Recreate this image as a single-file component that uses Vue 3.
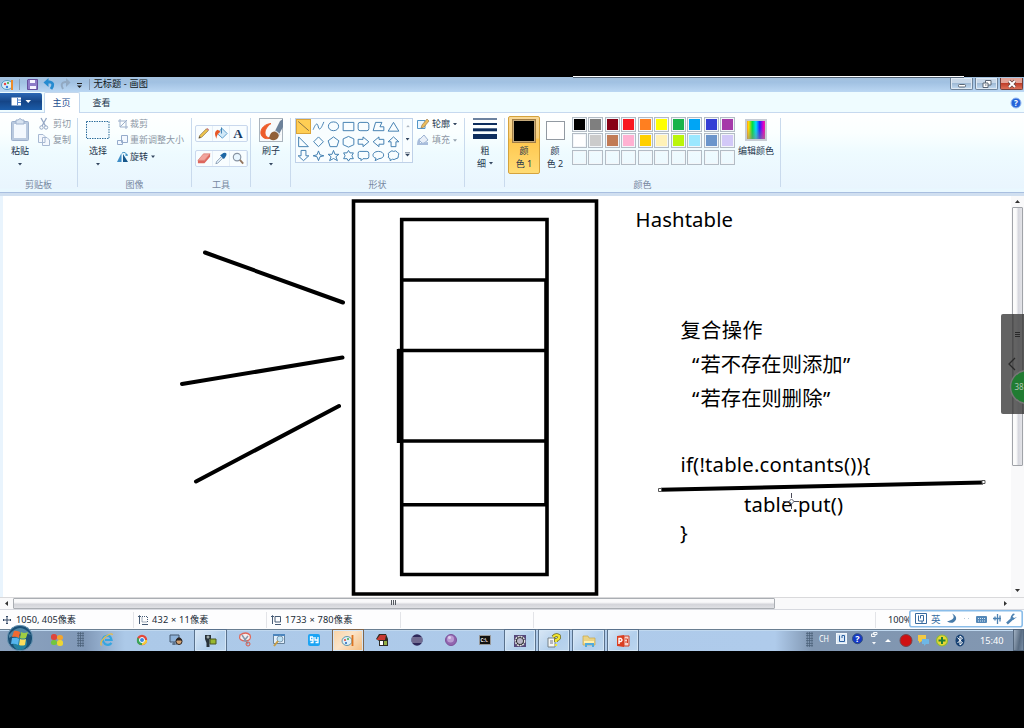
<script setup>
const shapes = [
  'M2 2.5 13 12',
  'M2 11C4 6 6 3 7 7S9 13 13 3',
  'M7.5 3C14.5 3 14.5 12 7.5 12S.5 3 7.5 3Z',
  'M2 3.5H13V12H2Z',
  'M4 3.5H11Q13 3.5 13 5.5V10Q13 12 11 12H4Q2 12 2 10V5.5Q2 3.5 4 3.5Z',
  'M4.5 3.5H11L9 8H13V12H2Z',
  'M7.5 3.5 13 12.5H2Z',
  'M2.5 3V13H12.5Z',
  'M7.5 3 12.5 8 7.5 13 2.5 8Z',
  'M7.5 3 13 7 11 13H4L2 7Z',
  'M7.5 2.5 13 5V11L7.5 13.5 2 11V5Z',
  'M2 5.5H7V3L13 8 7 13V10.5H2Z',
  'M13 5.5H8V3L2 8 8 13V10.5H13Z',
  'M7.5 3 13 8H10V13H5V8H2Z',
  'M5 2.5H10V8H13L7.5 13 2 8H5Z',
  'M7.5 3 9 7 13 8 9 9 7.5 13 6 9 2 8 6 7Z',
  'M7.5 2.5 9 6.5H13L10 9 11.5 13 7.5 10.8 3.5 13 5 9 2 6.5H6Z',
  'M7.5 2.5 9 5H12.5L11 8 12.5 11H9L7.5 13.5 6 11H2.5L4 8 2.5 5H6Z',
  'M3.5 3.5H11Q13 3.5 13 5.5V9Q13 11 11 11H7L5 13V11H4Q2 11 2 9V5.5Q2 3.5 3.5 3.5Z',
  'M7.5 3.5C14 3.5 15 10.5 8 11L4 13 5 10.5C0 9.5 1 3.5 7.5 3.5Z',
  'M4 4Q6 2 7.5 3.5Q10 2 11.5 4.5Q14 5 12.5 8Q13 11 10 11Q8 12.5 6.5 11.5L4 13V11Q1 10 2.5 8Q1 5 4 4Z',
]
const colors = [
  '#000', '#7f7f7f', '#880015', '#f81820', '#ff7f20', '#ffff00', '#18b34a', '#00a5f5', '#353ed5', '#a53aa9',
  '#fff', '#cbcbcb', '#c17b55', '#ffb1d2', '#ffd000', '#fff2b8', '#baf50a', '#9be8ff', '#6c95cb', '#d2c9f8',
  '', '', '', '', '', '', '', '', '', '',
]
</script>

<template>
  <div class="screen">
    <header class="titlebar">
      <svg class="quick" viewBox="0 0 90 15">
        <ellipse cx="7" cy="8" rx="5.500" ry="4.500" fill="#d6eefa" stroke="#579bc4" />
        <circle cx="5" cy="7" r="1.200" fill="#e44" /><circle cx="8" cy="6" r="1.100" fill="#4a4" /><circle cx="7" cy="10" r="1.200" fill="#37d" />
        <path d="M12 13V3" stroke="#ed8b28" stroke-width="2" />
        <path d="M19.500 2V13M89.500 2V13" stroke="#8599b2" />
        <path d="M28 2.500H37.500V12.500H27.500V3Z" fill="#8d7bc8" stroke="#65509d" /><path d="M30 3H35V6H30ZM30 9H36V12H30Z" fill="#f5f3ff" />
        <path d="M47 5H50Q55 6 51 12" fill="none" stroke="#268bd0" stroke-width="2.800" /><path d="M43.500 5.500 48.500 1V10Z" fill="#268bd0" />
        <path d="M67 5H65Q59.500 6 63 12" fill="none" stroke="#92a9c2" stroke-width="2" /><path d="M70.500 5.500 66 1V10Z" fill="#92a9c2" />
        <path d="M77 6.500H82" stroke="#222" /><path d="M77 8.500H82L79.500 11Z" fill="#222" />
      </svg>
      <span class="title">无标题 - 画图</span>
      <i class="edge"></i>
      <div class="winbtns">
        <b><svg viewBox="0 0 22 12"><rect x="7.500" y="6.500" width="7" height="2.500" rx="1" fill="#fff" stroke="#5b6675" /></svg></b>
        <b><svg viewBox="0 0 22 12"><path d="M9.500 2.500H15V7H9.500Z" fill="#fff" stroke="#5b6675" /><path d="M7 5H12V9.500H7Z" fill="#fff" stroke="#5b6675" /><path d="M9 7H10.500" stroke="#5b6675" /></svg></b>
        <b class="close"><svg viewBox="0 0 22 12"><path d="M8 3 14 9M14 3 8 9" stroke="#69423f" stroke-width="3.500" /><path d="M8 3 14 9M14 3 8 9" stroke="#fff" stroke-width="2" /></svg></b>
      </div>
    </header>
    <nav class="tabs">
      <div class="file"><svg viewBox="0 0 41 17"><path d="M11.500 4.500H21V12.500H11.500Z" fill="#fff" /><path d="M17.500 5V12M18 7H21M18 9.500H21" stroke="#5584ca" /><path d="M25.500 7H31L28.200 10Z" fill="#fff" /></svg></div>
      <div class="tab active">主页</div>
      <div class="tab">查看</div>
      <svg class="help" viewBox="0 0 12 12"><circle cx="6" cy="6" r="5" fill="#2564da" stroke="#9abaf0" /><text x="6" y="9" text-anchor="middle" font-size="8" font-weight="bold" fill="#fff">?</text></svg>
    </nav>

    <section class="ribbon">
      <div class="group g-clip">
        <div class="body">
          <div class="big paste">
            <svg viewBox="0 0 24 26"><rect x="3.500" y="3.500" width="17" height="19" rx="1" fill="#b9c9df" stroke="#9db0cc" /><path d="M6 6H18V20H6Z" fill="#f3f8fe" /><path d="M8 2H10Q12 -1 14 2H16V6H8Z" fill="#d7e2f0" stroke="#9db0cc" /></svg>
            <span>粘贴</span><i class="caret"></i>
          </div>
          <div class="rows">
            <div class="off"><svg viewBox="0 0 12 12"><path d="M3 0 7.500 8M8.500 0 4 8" stroke="#95a8c5" stroke-width="1.300" /><circle cx="3.500" cy="9.500" r="1.700" fill="none" stroke="#95a8c5" /><circle cx="8" cy="9.500" r="1.700" fill="none" stroke="#95a8c5" /></svg>剪切</div>
            <div class="off"><svg viewBox="0 0 12 12"><path d="M.5 .5H5L7 2.500V8.500H.5ZM4.500 3.500H9L11.500 6V11.500H4.500Z" fill="#f4f8fd" stroke="#a7b9d2" /></svg>复制</div>
          </div>
        </div>
        <footer>剪贴板</footer>
      </div>
      <div class="group g-image">
        <div class="body">
          <div class="big select">
            <svg viewBox="0 0 24 26"><rect x=".5" y="3.500" width="22.500" height="17" fill="#f3fbff" stroke="#2d6c9b" stroke-dasharray="1.500 1" /></svg>
            <span>选择</span><i class="caret"></i>
          </div>
          <div class="rows">
            <div class="off"><svg viewBox="0 0 12 12"><path d="M3 1V9H11M1 3H9V11M3 9 10 2" fill="none" stroke="#9db0cb" /></svg>裁剪</div>
            <div class="off"><svg viewBox="0 0 12 12"><path d="M4.500 1.500H10.500V8.500H4.500ZM.5 6.500H5.500V10.500H.5Z" fill="#f2f8ff" stroke="#95abcb" /></svg>重新调整大小</div>
            <div><svg viewBox="0 0 12 12"><path d="M0 11H4.500V2Z" fill="#408ec7" /><path d="M6 11H11L6 3Z" fill="#16588c" /><path d="M5 2Q9 0 10 5M8 4H11" fill="none" stroke="#3c91c5" /></svg>旋转<i class="caret"></i></div>
          </div>
        </div>
        <footer>图像</footer>
      </div>
      <div class="group g-tools">
        <div class="body">
          <div class="toolbox">
            <svg viewBox="0 0 17 16"><path d="M3 13 4 10 11 3 13 5 6 12Z" fill="#edc34c" stroke="#836d42" stroke-width=".7" /><path d="M11 3 13 5 14 4 12 2Z" fill="#ce7979" /><path d="M3 13 4 11 5 12Z" fill="#333" /></svg>
            <svg viewBox="0 0 17 16"><path d="M4.500 8 9.500 2.500 15 8 10 13Z" fill="#d1e9f8" stroke="#569aca" /><path d="M3.500 13.500Q0 6 5 4L8 6Q4 8 3.500 13.500Z" fill="#e75626" /><path d="M9 1.500V8" stroke="#367cae" /></svg>
            <svg viewBox="0 0 17 16"><text x="8.500" y="13" text-anchor="middle" class="serif" fill="#17385f">A</text></svg>
          </div>
          <div class="toolbox">
            <svg viewBox="0 0 17 16"><path d="M2 10 8 3H15L9 10Z" fill="#f2a49d" stroke="#d67569" stroke-width=".7" /><path d="M2 10H9L15 3V6L9 13H2Z" fill="#dd675e" /></svg>
            <svg viewBox="0 0 17 16"><path d="M3 13.500 4 11 9 6 10.500 7.500 5 13Z" fill="#e5f1fb" stroke="#68809b" stroke-width=".7" /><path d="M7.500 4.500 11.500 8.500 12.500 7.500 14 5Q15.500 1 11 2L8.500 4Z" fill="#1d66a5" /></svg>
            <svg viewBox="0 0 17 16"><circle cx="7.500" cy="6.500" r="4" fill="#e8f6ff" stroke="#8793a2" stroke-width="1.200" /><path d="M10.500 9.500 14 13.500" stroke="#937660" stroke-width="2" /></svg>
          </div>
        </div>
        <footer>工具</footer>
      </div>
      <div class="group g-brush">
        <div class="body">
          <div class="big">
            <svg viewBox="0 0 24 26"><rect x=".5" y=".5" width="23" height="23" fill="#f8fafb" stroke="#aab4bd" /><path d="M12 5.500C-2 7 -1 24 12 20C4 20 4 11 12 5.500Z" fill="#ed5d2b" stroke="#ed5d2b" /><path d="M15 15 21 3 24 1V9L19 18Z" fill="#6d829a" /><path d="M16 13 21 17" stroke="#d5dce5" stroke-width="2" /><path d="M10 20Q12 12 17 14Q22 17 18 21Q13 24 10 20Z" fill="#916039" /></svg>
            <span>刷子</span><i class="caret"></i>
          </div>
        </div>
      </div>
      <div class="group g-shapes">
        <div class="body">
          <div class="gallery">
            <div class="cells"><svg v-for="(d, i) in shapes" :key="i" :class="{ chosen: i === 0 }" viewBox="0 0 15 15"><path :d="d" /></svg></div>
            <div class="spin"><i class="caret up"></i><i class="caret"></i><i class="caret more"></i></div>
          </div>
          <div class="rows">
            <div><svg viewBox="0 0 12 12"><path d="M.5 2.500H8V10.500H.5Z" fill="#e9f6ff" stroke="#5396c8" /><path d="M4 10 5 7 10 1 12 3 7 9Z" fill="#ecbd5c" stroke="#947041" stroke-width=".6" /></svg>轮廓<i class="caret"></i></div>
            <div class="off"><svg viewBox="0 0 12 12"><path d="M2 6 7 1 11 6 6 10Z" fill="#e8eff8" stroke="#9cb2d1" /><path d="M0 11Q0 5 3 4V9L11 8V11Z" fill="#a8bddb" /></svg>填充<i class="caret"></i></div>
          </div>
        </div>
        <footer>形状</footer>
      </div>
      <div class="group g-size">
        <div class="body">
          <div class="big">
            <svg viewBox="0 0 24 26"><path d="M0 1H24" stroke="#0d2e5e" stroke-width="1.200" /><path d="M0 6H24" stroke="#0d2e5e" stroke-width="2" /><path d="M0 11.800H24" stroke="#0d2e5e" stroke-width="3" /><path d="M0 18.500H24" stroke="#0d2e5e" stroke-width="5" /></svg>
            <span>粗</span><span>细<i class="caret"></i></span>
          </div>
        </div>
      </div>
      <div class="group g-color">
        <div class="body">
          <div class="slot on"><i class="sw1"></i><span>颜</span><span>色 1</span></div>
          <div class="slot"><i class="sw2"></i><span>颜</span><span>色 2</span></div>
          <div class="palette"><i v-for="(c, i) in colors" :key="i" :style="{ backgroundColor: c || 'transparent' }"></i></div>
          <div class="edit"><i></i><span>编辑颜色</span></div>
        </div>
        <footer>颜色</footer>
      </div>
    </section>

    <main class="work">
      <svg class="paper" viewBox="0 196 1011 401" width="1011" height="401">
        <path d="M0 196H3V597H0Z" fill="#e9f4fd" />
        <g fill="none" stroke="#000" stroke-width="3.600">
          <path d="M353.500 201H596.500V594H353.500Z" />
          <path d="M401.700 219.500H547V574.500H401.700ZM401.700 280H547M398 350.500H547M398 441H547M401.700 504.800H547" />
          <path d="M545.200 280V504" stroke-width="2" /><path d="M399.800 349V443" stroke-width="6" />
        </g>
        <path d="M205 252.500 343 302.500M182 384 342.500 357.500M196 481.500 339 406" stroke="#000" stroke-width="4" stroke-linecap="round" />
        <path d="M661 489.800 983 482.500" stroke="#000" stroke-width="4" />
        <path d="M658.500 488.500H661.500V491.500H658.500ZM982 480.500H985V483.500H982Z" fill="#fff" stroke="#555" />
        <text x="635.500" y="227" textLength="97.500">Hashtable</text>
        <text x="680.500" y="337.500" textLength="82">复合操作</text>
        <text x="692" y="371.500" textLength="8">“</text><text x="700.500" y="371.500" textLength="142">若不存在则添加</text><text x="843" y="371.500" textLength="8">”</text>
        <text x="692" y="405.500" textLength="8">“</text><text x="700.500" y="405.500" textLength="122">若存在则删除</text><text x="823" y="405.500" textLength="8">”</text>
        <text x="680.500" y="472" textLength="190">if(!table.contants()){</text>
        <text x="744" y="512" textLength="99">table.put()</text>
        <text x="680" y="540">}</text>
        <path d="M791.500 493V498M791.500 504V509M783 501.500H788M794 501.500H799" stroke="#4b4b58" /><circle cx="791.500" cy="501.500" r="2" fill="none" stroke="#777785" />
      </svg>
      <aside class="vscroll"><i class="arrow top"></i><i class="thumb"></i><i class="arrow bottom"></i></aside>
      <svg class="float" viewBox="0 0 23 100"><rect width="26" height="100" rx="2" fill="#4d4d4d" fill-opacity=".88" /><path d="M12 0V100M22 0V100" stroke="#333" stroke-opacity=".45" /><path d="M14 18.500H19M14 20.500H19M14 22.500H19" stroke="#292929" /><path d="M14 44 8 50 14 56" fill="none" stroke="#292929" stroke-width="1.300" /><circle cx="26" cy="73" r="16.500" fill="#217c32" stroke="#777" stroke-width="1.500" /><text x="13.500" y="75.500" font-size="8" fill="#aec5b2">38</text></svg>
    </main>
    <div class="hscroll"><i class="arrow left"></i><div class="hthumb"><i></i><i></i><i></i></div><i class="arrow right"></i></div>

    <div class="status">
      <div class="s1"><svg viewBox="0 0 10 10"><path d="M5 1V9M1 5H9M4 2 5 1 6 2M4 8 5 9 6 8M2 4 1 5 2 6M8 4 9 5 8 6" fill="none" stroke="#344966" /></svg>1050, 405像素</div>
      <div class="s2"><svg viewBox="0 0 10 10"><path d="M1.500 1V9M0 2 1.500 .5 3 2M4 9.500H10" fill="none" stroke="#465b75" /><path d="M4 1.500H9.500V7H4Z" fill="none" stroke="#465b75" stroke-dasharray="1 1" /></svg><span class="wide">432 × 11像素</span></div>
      <div class="s3"><svg viewBox="0 0 10 10"><path d="M1.500 1V9M0 2 1.500 .5 3 2M4 9.500H10M4 1.500H9.500V7H4Z" fill="none" stroke="#465b75" /></svg><span class="wide">1733 × 780像素</span></div>
      <div class="s4"></div><div class="s5"></div>
      <div class="s6">100%</div>
      <svg class="ime" viewBox="0 0 114 18">
        <rect x=".8" y=".8" width="112.400" height="16" rx="2" fill="#fff" stroke="#8abde9" stroke-width="1.600" />
        <g fill="none" stroke="#386b9f"><path d="M6.500 3.500H17.500V13.500H6.500Z" /><path d="M9.500 5.500V11H14.500V5.500H11.500V8.500M13 11V13" /></g>
        <text x="22" y="13" font-size="9.500" fill="#356da3">英</text>
        <path d="M43 3.500Q48 9 38 11.500Q44 15 47 9.500Q48 6 43 3.500Z" fill="#477ba9" />
        <path d="M55 8.500H56M59 8.500H60" stroke="#b8cada" />
        <rect x="67" y="6" width="11" height="7" rx="1" fill="#5488b8" /><path d="M69 8.500H76M69 11H76" stroke="#d8e8f5" stroke-dasharray="1 1" />
        <path d="M88.500 4V14M84 8.500H92M86 6.500V10.500M91 5.500V11.500" stroke="#4d82b2" stroke-width="1.300" />
        <path d="M98 13.500 104 8" stroke="#4d82b2" stroke-width="2.500" /><path d="M104 3.500Q99 9 104 10L108 7 105 8 103.500 6.500 106 4Z" fill="#4d82b2" />
      </svg>
    </div>

    <footer class="taskbar">
      <svg class="start" viewBox="0 0 28 26"><circle cx="14" cy="13" r="12.700" fill="#1b5076" stroke="#6f9ab7" /><path d="M3 10Q14-4 25 10Q14 6 3 13Z" fill="#78adc5" opacity=".6" /><circle cx="14" cy="18" r="7" fill="#2ba1bd" opacity=".6" /><path d="M8 6Q10 5 14 7L13 13Q10 11 6 12Z" fill="#f06a32" /><path d="M15 7Q18 9 22 7L20 13Q17 14 14 13Z" fill="#9fce42" /><path d="M6 13Q10 12 13 14L12 20Q9 18 5 19Z" fill="#55b5ee" /><path d="M14 14Q17 15 20 14L19 20Q16 21 13 20Z" fill="#fbdc5b" /></svg>
      <svg class="quad" viewBox="0 0 14 14"><rect x="1" y="1" width="6" height="6" rx="2.500" fill="#dd463c" /><rect x="7" y="2" width="6" height="5" rx="2.500" fill="#f4a52c" /><rect x="1" y="7" width="6" height="5" rx="2.500" fill="#72c63e" /><rect x="7" y="7" width="6" height="6" rx="2.500" fill="#edd633" /></svg>
      <i class="grip"></i>
      <div class="apps">
        <div><svg viewBox="0 0 16 16"><path d="M12.500 11Q10 14 6 12Q2 8 5 5Q11 1 12.500 8H6" fill="none" stroke="#35a6e1" stroke-width="2.200" /><path d="M2.500 13.500Q0 11 6 5Q13 0 13.500 3" fill="none" stroke="#ecbd42" stroke-width="1.200" /></svg></div>
        <div><svg viewBox="0 0 16 16"><circle cx="8" cy="8" r="5.200" fill="#e3483b" /><path d="M8 8H13Q14 12 8 13.200Z" fill="#f4ca3d" /><path d="M3.500 5.500 8 9 8 13Q2 13 3 7Z" fill="#38a65b" /><circle cx="8" cy="8" r="2.500" fill="#3888df" stroke="#fff" /></svg></div>
        <div><svg viewBox="0 0 16 16"><path d="M2 3H11V10H2Z" fill="#8eb2d9" stroke="#43576e" /><path d="M4 12H9M6 10V13" stroke="#43576e" /><circle cx="11" cy="9.500" r="3" fill="#d5a474" stroke="#2c2522" /><path d="M7.500 8.500Q11 2 14.500 8.500Z" fill="#2c2522" /></svg></div>
        <div class="open"><svg viewBox="0 0 16 16"><path d="M3 2H9V6H7.500V14H4.500V10L3 6Z" fill="#28323a" /><circle cx="6" cy="4" r="1.500" fill="#9eaaa9" /><path d="M8 6H14V11H8Z" fill="#98b82d" stroke="#485522" /></svg></div>
        <div><svg viewBox="0 0 16 16"><path d="M3 3Q9-1 13 3Q15 8 9 9Q1 9 3 3Z" fill="#f4eded" stroke="#df6659" stroke-width="1.300" /><path d="M5 3 11 12M11 4 7 9" stroke="#8497ab" stroke-width="1.500" /><circle cx="11" cy="12" r="2" fill="none" stroke="#db5a4c" /></svg></div>
        <div><svg viewBox="0 0 16 16"><path d="M2.500 2.500H13.500V11.500H2.500Z" fill="#e2effb" stroke="#67829b" /><path d="M2 3H14" stroke="#4b85bd" stroke-width="2" /><circle cx="9" cy="7" r="3" fill="#bde2f4" stroke="#829cb4" /><path d="M7 9 3 14" stroke="#c89d44" stroke-width="2" /></svg></div>
        <div><svg viewBox="0 0 16 16"><rect x="2" y="2" width="12" height="12" rx="2" fill="#1ca4f4" /><path d="M7 5H4.500V8H7V5M7 8V10.500H4.500M9 5V8H12V5M12 8V10.500H9.500" fill="none" stroke="#fff" stroke-width="1.300" /></svg></div>
        <div class="open orange"><svg viewBox="0 0 16 16"><ellipse cx="7" cy="8" rx="5" ry="4.500" fill="#ddeff7" stroke="#6398a9" /><circle cx="5" cy="7" r="1" fill="#d43" /><circle cx="8" cy="6" r="1" fill="#4a4" /><circle cx="6" cy="10" r="1" fill="#26b" /><path d="M12.500 2V13" stroke="#dc7321" stroke-width="1.800" /></svg></div>
        <div><svg viewBox="0 0 16 16"><path d="M2 7 5 2H12L14 7V14H5V9Z" fill="#2f2c25" /><path d="M3 7 6 3H12L11 8H3Z" fill="#c73932" /><path d="M6 9H9V13H6Z" fill="#fff" /><path d="M10 9H13V13H10Z" fill="#91af43" /></svg></div>
        <div><svg viewBox="0 0 16 16"><circle cx="8" cy="8" r="5.700" fill="#2e285a" /><path d="M3 6H13M2.500 8H13.500M3 10H13" stroke="#b4aec8" stroke-width="1.100" /></svg></div>
        <div><svg viewBox="0 0 16 16"><circle cx="8" cy="8" r="5.500" fill="#9164af" stroke="#7d5199" /><circle cx="7.500" cy="7" r="3.500" fill="#b99bd2" /><circle cx="6.500" cy="5.500" r="1.500" fill="#ddcdea" /></svg></div>
        <div><svg viewBox="0 0 16 16"><path d="M2.500 3.500H13.500V12.500H2.500Z" fill="#111" stroke="#999" /><text x="3.500" y="10" font-size="4.500" font-weight="bold" fill="#fff">C:\.</text></svg></div>
        <div class="open"><svg viewBox="0 0 16 16"><rect x="2" y="2" width="12" height="12" fill="#56497a" /><circle cx="8" cy="8" r="4.600" fill="#19191e" stroke="#dfdfdf" stroke-width="1.500" stroke-dasharray="2 .7" /><circle cx="8" cy="8" r="3" fill="#b9b6c6" /></svg></div>
        <div class="open"><svg viewBox="0 0 16 16"><path d="M2 5H9V14H2Z" fill="#f5f6f4" stroke="#758088" /><path d="M4 8H7M4 10H7" stroke="#778" /><path d="M7 4Q10 1 13 3Q14 6 10 7V9" fill="none" stroke="#6b651c" stroke-width="3.600" /><path d="M7 4Q10 1 13 3Q14 6 10 7V9M10 11V13" fill="none" stroke="#f0e532" stroke-width="2.200" /></svg></div>
        <div class="open"><svg viewBox="0 0 16 16"><path d="M2 3H7L8 5H14V12H2Z" fill="#ead384" stroke="#c9a849" stroke-width=".7" /><path d="M3 8H13V10H3Z" fill="#fff0af" /><path d="M4 14V10H13V14H11V12H6V14Z" fill="#51aadb" /></svg></div>
        <div class="open"><svg viewBox="0 0 16 16"><path d="M2 3 9 2V14L2 13Z" fill="#db3e21" /><path d="M9 3H14V13H9Z" fill="#f8d5ce" stroke="#d34127" /><path d="M4 11V5.500H6Q8 7 6 8.500H4" fill="none" stroke="#fff" stroke-width="1.400" /><path d="M10 6H12.500V10M10 9H13" fill="none" stroke="#d34127" /></svg></div>
      </div>
      <i class="grip right"></i>
      <svg class="tray" viewBox="0 0 158 22">
        <text x="5" y="13" textLength="10" lengthAdjust="spacingAndGlyphs" font-size="8.500" fill="#fff">CH</text>
        <rect x="22.500" y="4.500" width="10" height="10" fill="#dce9f7" stroke="#f2f7fb" /><path d="M25.500 6.500V12.500H30.500V6.500H28V9" fill="none" stroke="#2c609f" />
        <circle cx="43.500" cy="9.700" r="5" fill="#1438c6" stroke="#33507e" /><text x="43.500" y="13" text-anchor="middle" font-size="9" font-weight="bold" fill="#fff">?</text>
        <path d="M59.500 3.500H63V5.500H59.500ZM57.500 5H61V7.500H57.500Z" fill="#8297b1" stroke="#f5f8fb" /><path d="M58 13H62L60 15.500Z" fill="#f5f8fb" />
        <path d="M71 13H77L74 10Z" fill="#fff" />
        <circle cx="92" cy="11.500" r="6" fill="#cf1012" stroke="#73454b" />
        <path d="M104 6H112V12H108L105 14V12H104Z" fill="#f2c945" /><path d="M108 10H115V15H112L110 17V15H108Z" fill="#6eb7e6" />
        <circle cx="128" cy="11.500" r="5.500" fill="#e9d631" stroke="#8bbb39" stroke-width="1.200" /><path d="M128 8V15M124.500 11.500H131.500" stroke="#218137" stroke-width="2" />
        <ellipse cx="146" cy="11.500" rx="4.500" ry="6" fill="#174173" /><path d="M143.500 8.500 148.500 14 146 16V7L148.500 9 143.500 14" fill="none" stroke="#fff" />
      </svg>
      <span class="clock">15:40</span>
      <i class="desktop"></i>
    </footer>
  </div>
</template>

<style>
body { background: #000; overflow: hidden; }
</style>
<style scoped>
* { box-sizing: border-box; }
.screen { width: 1024px; height: 728px; padding-top: 77px; background: #000; font: 9px/12px "Noto Sans", "Noto Sans CJK SC", sans-serif; color: #24364d; display: flex; flex-direction: column; overflow: hidden; }
svg { display: block; flex: none; overflow: visible; }
i { font-style: normal; flex: none; }
.titlebar { position: relative; height: 15px; flex: none; display: flex; background: linear-gradient(#a4c2df, #a1c1e2 35%, #bbd7f3); }
.quick { width: 90px; height: 15px; }
.title { margin-left: 3.500px; line-height: 14px; color: #101820; white-space: nowrap; font-size: 9.200px; letter-spacing: .1px; }
.edge { position: absolute; left: 573px; top: -1px; width: 391px; height: 2px; background: #fff; border-bottom: 1px solid #536477; }
.winbtns { margin-left: auto; display: flex; gap: 2px; padding: 1px 1px 0 0; }
.winbtns b { width: 23px; height: 12px; border: 1px solid #6e839a; border-top: 0; border-radius: 0 0 2px 2px; background: linear-gradient(#c8d8e9 0 45%, #9db8d4 46%, #c4dcf3); box-shadow: inset 0 0 0 1px #e0eaf4; }
.winbtns svg { width: 22px; height: 12px; }
.winbtns .close { background: linear-gradient(#e4a599 0 45%, #be3a26 46%, #dc7159); border-color: #74403b; box-shadow: none; }
.tabs { height: 21px; flex: none; background: #effcff; border-bottom: 1px solid #c6d9ef; display: flex; align-items: flex-start; }
.file { width: 42px; height: 17px; margin-top: 1px; background: linear-gradient(#2b67b5, #154587 50%, #1b5ca9); border-radius: 0 2px 0 0; }
.file svg { width: 41px; height: 17px; }
.tab { height: 20px; padding: 5px 12px 0 11.500px; margin-left: 1px; }
.tab.active { width: 36px; height: 21px; margin-left: 2px; padding: 4px 1px 0 0; text-align: center; color: #244d90; background: #fff; border: 1px solid #c3d7ed; border-bottom: 0; border-radius: 2px 2px 0 0; }
.help { width: 12px; height: 12px; margin: 5px 2px 0 auto; }
.ribbon { height: 83px; flex: none; display: flex; background: linear-gradient(#fff 0, #faffff 25%, #eefbff 50%, #e9f5fe 94%, #e9f8ff 95%); border-bottom: 3px solid #d0dff0; box-shadow: inset 0 -1px #a9bfe0; }
.group { height: 69px; margin-top: 5px; border-right: 1px solid #c9daed; display: flex; flex-direction: column; white-space: nowrap; }
.body { height: 61px; display: flex; align-items: flex-start; flex: none; }
.group footer { color: #7788a1; text-align: center; line-height: 11px; }
.g-clip { width: 78px; } .g-image { width: 114px; } .g-tools { width: 59px; } .g-brush { width: 40px; } .g-shapes { width: 174px; } .g-size { width: 40px; } .g-color { width: 276px; }
.big { width: 24px; display: flex; flex-direction: column; align-items: center; }
.big svg { width: 24px; height: 26px; margin-bottom: 1px; }
.paste { margin-left: 8px; } .select { margin-left: 8px; }
.g-brush .big, .g-size .big { margin-left: 8px; }
.g-size .big { line-height: 12.500px; }
.caret { display: inline-block; width: 4px; height: 2.500px; background: #344760; clip-path: polygon(0 0, 100% 0, 50% 100%); }
.big > .caret { margin-top: 6px; }
.big span .caret { margin: 0 0 2px 3px; }
.rows .caret { margin-left: 3px; }
.rows { display: flex; flex-direction: column; }
.rows div { height: 16.300px; display: flex; align-items: center; }
.rows svg { width: 12px; height: 12px; margin-right: 3px; }
.rows .off { color: #8d97a5; }
.rows .off .caret { opacity: .5; }
.rows { margin-top: -2px; }
.g-clip .rows { margin-left: 6px; } .g-image .rows { margin-left: 7px; } .g-shapes .rows { margin-left: 4px; }
.g-image .rows svg { margin-right: 1px; }
.g-tools .body { flex-direction: column; padding: 7px 0 0 3px; gap: 8px; }
.toolbox { display: flex; width: 53px; height: 17px; border: 1px solid #c9d8ed; border-radius: 2px; background: #f8fdff; }
.toolbox svg { width: 17px; height: 15px; border-right: 1px solid #e5eff8; }
.serif { font: bold 14px "Liberation Serif", serif; }
.gallery { margin: 0 0 0 4px; width: 118px; height: 45px; border: 1px solid #bfd1e8; background: #f8fdff; display: flex; }
.cells { display: grid; grid-template-columns: repeat(7, 15px); grid-auto-rows: 14.600px; width: 106px; }
.cells svg { width: 15px; height: 14.600px; fill: none; stroke: #3878ad; stroke-width: .95; }
.cells .chosen { background: #ffce54; outline: 1px solid #daa43a; outline-offset: -1px; stroke: #826d42; }
.spin { border-left: 1px solid #d7e5f3; width: 10px; display: flex; flex-direction: column; justify-content: space-around; align-items: center; }
.spin .up { transform: rotate(180deg); opacity: .4; }
.spin .more { width: 5px; height: 5px; clip-path: polygon(0 0, 100% 0, 100% 20%, 0 20%, 0 45%, 100% 45%, 50% 100%, 0 45%); }
.slot { width: 30px; height: 58px; display: flex; flex-direction: column; align-items: center; padding-top: 3px; line-height: 12.500px; }
.slot.on { width: 32px; margin: -2px 0 0 3px; border: 1px solid #d5a33d; border-radius: 2px; padding-top: 2px; background: linear-gradient(#f9d897, #fbd077 38%, #ffc64c 39%, #ffdc75); }
.slot i { width: 19px; height: 19px; background: #fff; border: 1px solid #929aa2; }
.slot .sw1 { width: 24px; height: 24px; border: 1px solid #a37f46; background: #000; box-shadow: inset 0 0 0 1px #c5aa7c; margin-bottom: 2px; }
.slot .sw2 { margin-bottom: 5px; }
.palette { margin: -1px 0 0 2px; display: grid; grid-template-columns: repeat(10, 15px); grid-auto-rows: 15px; column-gap: 1.450px; row-gap: 1.400px; }
.palette i { border: 1px solid #b3bcc5; box-shadow: inset 0 0 0 1px #f3f6f9; }
.edit { margin-left: 2px; width: 38px; display: flex; flex-direction: column; align-items: center; padding-top: 1px; }
.edit i { width: 22px; height: 22px; margin-bottom: 4px; border: 2px solid #c6ccd4; background: linear-gradient(#8880 40%, #888a), linear-gradient(90deg, #f44, #fd0, #0d4, #0df, #22f, #d0c, #f45); background-origin: border-box; }
.work { position: relative; height: 401px; flex: none; display: flex; background: #fff; }
.paper { width: 1011px; height: 401px; }
.paper text { font: 20.300px "Noto Sans", "Noto Sans CJK SC", sans-serif; fill: #000; }
.vscroll { width: 13px; background: #f9f9fa; display: flex; flex-direction: column; align-items: center; padding-top: 4px; }
.arrow { width: 5px; height: 3px; background: #333; clip-path: polygon(50% 0, 100% 100%, 0 100%); }
.vscroll .thumb { margin-top: 4px; width: 11px; height: 259px; border: 1px solid #a0a3a8; border-radius: 1px; background: linear-gradient(90deg, #fbfbfb 35%, #d6d7de 60%, #e4e4e8); }
.bottom { margin-top: 123px; transform: rotate(180deg); }
.float { position: absolute; left: 1001px; top: 118px; width: 23px; height: 100px; overflow: hidden; }
.hscroll { height: 12px; flex: none; background: #f9f9fa; border-top: 1px solid #d9d9db; display: flex; align-items: center; padding: 0 17px 0 5px; }
.left, .right.arrow { width: 3px; height: 5px; clip-path: polygon(0 50%, 100% 0, 100% 100%); }
.hthumb { margin-left: 5px; width: 762px; height: 11px; border: 1px solid #aaaeb3; border-radius: 1px; background: linear-gradient(#f9f9fa 35%, #d4d5da 60%, #dfe0e4); display: flex; justify-content: center; align-items: center; gap: 1px; padding: 0 2px 2px 0; }
.hthumb i { width: 1px; height: 5px; background: #555a60; }
.right.arrow { margin-left: auto; transform: rotate(180deg); }
.status { position: relative; height: 20px; flex: none; display: flex; align-items: center; background: #fdfdfe; color: #202a36; font-size: 9.200px; border-top: 1px solid #d7d9df; }
.status > div { height: 16px; line-height: 16px; display: flex; align-items: center; border-right: 1px solid #e3e4e8; white-space: nowrap; }
.status > div svg { width: 10px; height: 10px; margin-right: 4px; }
.status .wide { letter-spacing: .2px; }
.s1 { width: 134px; padding-left: 2px; } .s2 { width: 133px; padding-left: 4px; } .s3 { width: 134px; padding-left: 4px; } .s4 { width: 133px; } .s5 { width: 342px; }
.status .s6 { width: 38px; padding-left: 12px; border: 0; }
.ime { position: absolute; left: 909px; top: 0; width: 114px; height: 18px; }
.taskbar { height: 22px; flex: none; display: flex; background: linear-gradient(90deg, #8ca3bf 0, #8199b8 85px, #acc9e8 125px, #afcbeb 775px, #8096b1 812px, #8297b1 100%); box-shadow: inset 0 1px #6a7e91, inset 0 2px #c0d8ef; }
.start { width: 28px; height: 26px; margin: -4px 0 0 6px; position: relative; }
.quad { width: 14px; height: 14px; margin: 4px 0 0 16px; }
.grip { width: 7px; height: 15px; margin: 3px 6px 0 13px; background: radial-gradient(circle, #4a6078 .8px, transparent 1px) 0 0 / 2.400px 2.500px; }
.apps { display: flex; width: 550.400px; }
.apps > div { width: 34.400px; flex: none; display: flex; align-items: center; justify-content: center; }
.apps .open { border: 1px solid #59718c; border-width: 1px 1px 0; box-shadow: inset 0 0 0 1px #d4e6f6; margin: 0 1px; width: 32.400px; background: linear-gradient(135deg, #d9e7f5, #b2cfec 60%, #bdd6ee); }
.apps .orange { background: linear-gradient(135deg, #f8d3a6, #fbe4c9 45%, #f4bb7c); border-color: #80664d; }
.apps svg { width: 16px; height: 16px; }
.grip.right { margin: 3px 2px 0 165.600px; }
.tray { width: 158px; height: 22px; margin-left: -1px; }
.clock { margin-left: 8px; width: 25px; line-height: 23px; font-size: 9.200px; color: #fff; }
.desktop { margin-left: auto; width: 11px; border: 1px solid #54677d; background: linear-gradient(100deg, #a1b1c3, #586b81 60%, #788da5); }
</style>
